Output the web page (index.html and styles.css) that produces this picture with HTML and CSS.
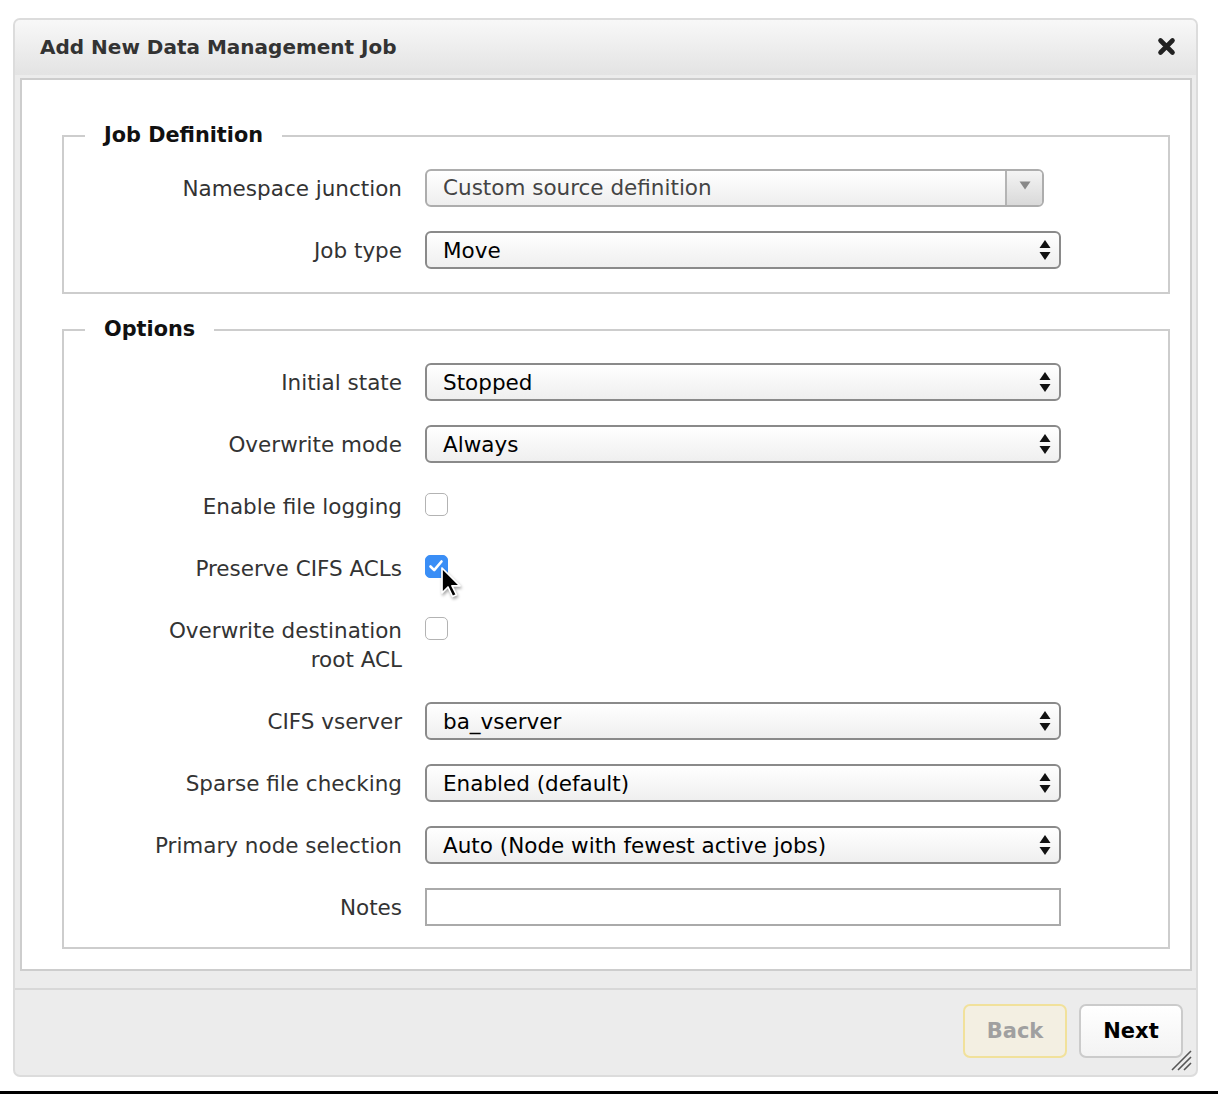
FILE: index.html
```html
<!DOCTYPE html>
<html>
<head>
<meta charset="utf-8">
<title>Add New Data Management Job</title>
<link rel="stylesheet" href="styles.css">
</head>
<body>
<div class="page">
  <div class="dialog">
    <div class="dlg-header">
      <span class="dlg-title">Add New Data Management Job</span>
      <svg class="close" width="19" height="19" viewBox="0 0 19 19"><path d="M3.5 3.5 L15.5 15.5 M15.5 3.5 L3.5 15.5" stroke="#222" stroke-width="4.6" stroke-linecap="round"/></svg>
    </div>
    <div class="dlg-body">
      <fieldset class="group">
        <legend>Job Definition</legend>
        <div class="form">
          <label class="lbl">Namespace junction</label>
          <div class="combo"><span class="combo-text">Custom source definition</span><span class="combo-btn"><svg width="12" height="9" viewBox="0 0 12 9"><path d="M0.5 0.5 H11.5 L6 8.5 Z" fill="#888"/></svg></span></div>
          <label class="lbl">Job type</label>
          <div class="select"><span>Move</span><svg class="updown" width="12" height="22" viewBox="0 0 12 22"><path d="M6 1 L11.5 9 H0.5 Z M0.5 13 H11.5 L6 21 Z" fill="#111"/></svg></div>
        </div>
      </fieldset>
      <fieldset class="group second">
        <legend>Options</legend>
        <div class="form">
          <label class="lbl">Initial state</label>
          <div class="select"><span>Stopped</span><svg class="updown" width="12" height="22" viewBox="0 0 12 22"><path d="M6 1 L11.5 9 H0.5 Z M0.5 13 H11.5 L6 21 Z" fill="#111"/></svg></div>
          <label class="lbl">Overwrite mode</label>
          <div class="select"><span>Always</span><svg class="updown" width="12" height="22" viewBox="0 0 12 22"><path d="M6 1 L11.5 9 H0.5 Z M0.5 13 H11.5 L6 21 Z" fill="#111"/></svg></div>
          <label class="lbl">Enable file logging</label>
          <div class="cbcell"><span class="cb"></span></div>
          <label class="lbl">Preserve CIFS ACLs</label>
          <div class="cbcell"><span class="cb on"><svg width="22" height="22" viewBox="0 0 22 22"><path d="M5.5 11.5 L9.2 15.2 L16.5 6.5" fill="none" stroke="#fff" stroke-width="2.6" stroke-linecap="round" stroke-linejoin="round"/></svg></span>
            <svg class="cursor" width="24" height="34" viewBox="0 0 24 34"><path d="M2 2 V27 L8 21 L12.5 30.5 L16.5 28.8 L12 19.8 H20 Z" fill="#000" stroke="#fff" stroke-width="1.7" stroke-linejoin="round"/></svg>
          </div>
          <label class="lbl">Overwrite destination<br>root ACL</label>
          <div class="cbcell"><span class="cb"></span></div>
          <label class="lbl">CIFS vserver</label>
          <div class="select"><span>ba_vserver</span><svg class="updown" width="12" height="22" viewBox="0 0 12 22"><path d="M6 1 L11.5 9 H0.5 Z M0.5 13 H11.5 L6 21 Z" fill="#111"/></svg></div>
          <label class="lbl">Sparse file checking</label>
          <div class="select"><span>Enabled (default)</span><svg class="updown" width="12" height="22" viewBox="0 0 12 22"><path d="M6 1 L11.5 9 H0.5 Z M0.5 13 H11.5 L6 21 Z" fill="#111"/></svg></div>
          <label class="lbl">Primary node selection</label>
          <div class="select"><span>Auto (Node with fewest active jobs)</span><svg class="updown" width="12" height="22" viewBox="0 0 12 22"><path d="M6 1 L11.5 9 H0.5 Z M0.5 13 H11.5 L6 21 Z" fill="#111"/></svg></div>
          <label class="lbl">Notes</label>
          <div class="input"></div>
        </div>
      </fieldset>
    </div>
    <div class="dlg-footer">
      <button class="btn back">Back</button>
      <button class="btn next">Next</button>
      <svg class="grip" width="26" height="26" viewBox="0 0 26 26"><path d="M24 5 L5 24 M24 11 L11 24 M24 17 L17 24" stroke="#555" stroke-width="1.6"/></svg>
    </div>
  </div>
  <div class="edge"></div>
</div>
</body>
</html>
```
FILE: styles.css
```css
* { box-sizing: border-box; }
html, body { margin: 0; padding: 0; background: #fff; }
body {
  font-family: "DejaVu Sans", Verdana, sans-serif;
  color: #333;
}
.page {
  padding: 18px 0 0 13px;
  width: 1218px;
  height: 1094px;
}
.dialog {
  width: 1185px;
  height: 1059px;
  border: 2px solid #dcdcdc;
  border-radius: 7px;
  background: #ececec;
  display: flex;
  flex-direction: column;
  position: relative;
}
.dlg-header {
  height: 55px;
  flex: none;
  display: flex;
  align-items: center;
  justify-content: space-between;
  padding: 0 20px 0 25px;
  border-radius: 5px 5px 0 0;
  background: linear-gradient(#f8f8f8, #e3e3e3);
}
.dlg-title {
  font-size: 20px;
  font-weight: bold;
  color: #333;
  margin-top: -1px;
}
.close { margin-top: -2px; }
.dlg-body {
  flex: none;
  margin: 3px 4px 0 5px;
  border: 2px solid #cdcdcd;
  background: #fff;
  padding: 41px 20px 20px 40px;
  height: 893px;
}
.group {
  margin: 0;
  padding: 19px 0 23px 0;
  border: 2px solid #cdcdcd;
}
.group.second { margin-top: 21px; padding-bottom: 21px; }
legend {
  margin-left: 21px;
  padding: 0 19px;
  font-size: 20.8px;
  font-weight: bold;
  line-height: 29px;
  color: #111;
}
.form {
  display: grid;
  grid-template-columns: 338px 636px;
  column-gap: 23px;
  row-gap: 24px;
}
.lbl {
  text-align: right;
  font-size: 21.5px;
  line-height: 29px;
  padding: 4.5px 0;
  color: #333;
}
.select, .combo, .input {
  height: 38px;
  border-radius: 6px;
}
.select {
  display: flex;
  align-items: center;
  justify-content: space-between;
  padding: 0 8px 0 16px;
  border: 2px solid #8a8a8a;
  background: linear-gradient(#fff, #efefef);
  font-size: 21.5px;
  color: #000;
}
.combo {
  width: 619px;
  display: flex;
  border: 2px solid #adadad;
  background: linear-gradient(#fff, #eee);
  font-size: 21.5px;
  color: #444;
  overflow: hidden;
}
.combo-text {
  flex: 1;
  padding-left: 16px;
  line-height: 34px;
}
.combo-btn {
  width: 37px;
  border-left: 2px solid #b4b4b4;
  background: linear-gradient(#f4f4f4, #d9d9d9);
  display: flex;
  align-items: flex-start;
  justify-content: center;
  padding-top: 10px;
}
.input {
  border: 2px solid #aaa;
  border-radius: 0;
  background: #fff;
}
.cbcell {
  height: 38px;
  display: flex;
  align-items: flex-start;
  padding-top: 6px;
  position: relative;
}
.cb {
  width: 23px;
  height: 23px;
  border: 1.5px solid #b3b3b3;
  border-radius: 5px;
  background: #fff;
  display: block;
}
.cb.on {
  background: #3a8ef6;
  border-color: #3a8ef6;
  position: relative;
}
.cb.on svg { position: absolute; left: -1.5px; top: -1.5px; }
.cursor {
  position: absolute;
  left: 15px;
  top: 17px;
  filter: drop-shadow(1px 2px 1.5px rgba(0,0,0,0.35));
}
.dlg-footer {
  margin-top: 17px;
  border-top: 2px solid #d8d8d8;
  display: flex;
  justify-content: flex-end;
  gap: 12px;
  padding: 14px 13px 0 0;
  position: relative;
  flex: 1;
}
.btn {
  width: 104px;
  height: 54px;
  border-radius: 7px;
  font-family: inherit;
  font-size: 21px;
  font-weight: bold;
}
.back {
  background: #f3efe2;
  border: 2px solid #f1e19b;
  color: #a0a0a0;
}
.next {
  background: linear-gradient(#fff, #f3f3f3);
  border: 2px solid #cbcbcb;
  color: #000;
}
.grip {
  position: absolute;
  right: 3px;
  bottom: 3px;
}
.edge {
  margin-top: 14px;
  height: 3px;
  width: 1218px;
  margin-left: -13px;
  background: #000;
}
```
